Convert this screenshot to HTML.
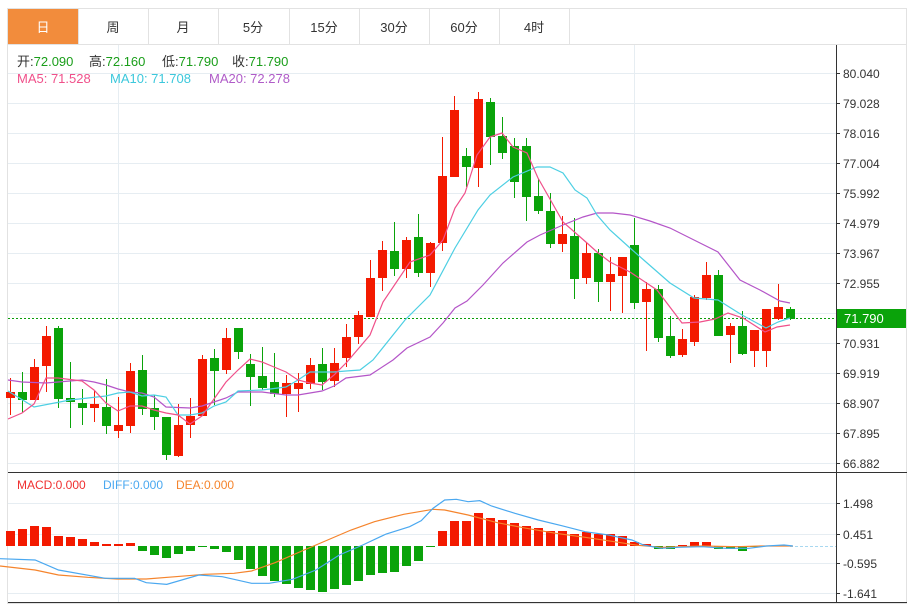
<!DOCTYPE html>
<html><head><meta charset="utf-8"><style>
body{margin:0;width:913px;height:605px;background:#fff;overflow:hidden;font-family:"Liberation Sans","Noto Sans CJK SC",sans-serif}
svg{position:absolute;left:0;top:0}
</style></head><body>
<svg width="913" height="605" viewBox="0 0 913 605" font-family="Liberation Sans, Noto Sans CJK SC, sans-serif">
<rect x="7.5" y="8.5" width="899" height="595" fill="none" stroke="#e2e2e2"/>
<line x1="8" y1="44.5" x2="907" y2="44.5" stroke="#e2e2e2"/>
<rect x="8" y="9" width="70" height="35" fill="#f28c3c"/>
<g stroke="#e2e2e2"><line x1="78.5" y1="9" x2="78.5" y2="44"/><line x1="148.5" y1="9" x2="148.5" y2="44"/><line x1="218.5" y1="9" x2="218.5" y2="44"/><line x1="289.5" y1="9" x2="289.5" y2="44"/><line x1="359.5" y1="9" x2="359.5" y2="44"/><line x1="429.5" y1="9" x2="429.5" y2="44"/><line x1="499.5" y1="9" x2="499.5" y2="44"/><line x1="569.5" y1="9" x2="569.5" y2="44"/></g>
<g font-size="13" text-anchor="middle" fill="#333"><text x="43" y="32" fill="#fff">日</text><text x="113" y="32">周</text><text x="183" y="32">月</text><text x="253" y="32">5分</text><text x="324" y="32">15分</text><text x="394" y="32">30分</text><text x="464" y="32">60分</text><text x="534" y="32">4时</text></g>
<g stroke="#e6edf2" stroke-width="1">
<line x1="8" y1="73.5" x2="836" y2="73.5"/><line x1="8" y1="103.5" x2="836" y2="103.5"/><line x1="8" y1="133.5" x2="836" y2="133.5"/><line x1="8" y1="163.5" x2="836" y2="163.5"/><line x1="8" y1="193.5" x2="836" y2="193.5"/><line x1="8" y1="223.5" x2="836" y2="223.5"/><line x1="8" y1="253.5" x2="836" y2="253.5"/><line x1="8" y1="283.5" x2="836" y2="283.5"/><line x1="8" y1="313.5" x2="836" y2="313.5"/><line x1="8" y1="343.5" x2="836" y2="343.5"/><line x1="8" y1="373.5" x2="836" y2="373.5"/><line x1="8" y1="403.5" x2="836" y2="403.5"/><line x1="8" y1="433.5" x2="836" y2="433.5"/><line x1="8" y1="463.5" x2="836" y2="463.5"/>
<line x1="118.5" y1="45" x2="118.5" y2="603"/><line x1="634.5" y1="45" x2="634.5" y2="603"/>
<line x1="8" y1="503.5" x2="836" y2="503.5"/><line x1="8" y1="534.5" x2="836" y2="534.5"/><line x1="8" y1="563.5" x2="836" y2="563.5"/><line x1="8" y1="593.5" x2="836" y2="593.5"/>
</g>
<line x1="836.5" y1="45" x2="836.5" y2="603" stroke="#333"/>
<line x1="8" y1="472.5" x2="907" y2="472.5" stroke="#333"/>
<line x1="8" y1="602.5" x2="907" y2="602.5" stroke="#333"/>
<g stroke="#333"><line x1="836" y1="73.5" x2="840" y2="73.5"/><line x1="836" y1="103.5" x2="840" y2="103.5"/><line x1="836" y1="133.5" x2="840" y2="133.5"/><line x1="836" y1="163.5" x2="840" y2="163.5"/><line x1="836" y1="193.5" x2="840" y2="193.5"/><line x1="836" y1="223.5" x2="840" y2="223.5"/><line x1="836" y1="253.5" x2="840" y2="253.5"/><line x1="836" y1="283.5" x2="840" y2="283.5"/><line x1="836" y1="343.5" x2="840" y2="343.5"/><line x1="836" y1="373.5" x2="840" y2="373.5"/><line x1="836" y1="403.5" x2="840" y2="403.5"/><line x1="836" y1="433.5" x2="840" y2="433.5"/><line x1="836" y1="463.5" x2="840" y2="463.5"/><line x1="836" y1="503.5" x2="840" y2="503.5"/><line x1="836" y1="534.5" x2="840" y2="534.5"/><line x1="836" y1="563.5" x2="840" y2="563.5"/><line x1="836" y1="593.5" x2="840" y2="593.5"/></g>
<g font-size="12" fill="#333"><text x="843" y="78">80.040</text><text x="843" y="108">79.028</text><text x="843" y="138">78.016</text><text x="843" y="168">77.004</text><text x="843" y="198">75.992</text><text x="843" y="228">74.979</text><text x="843" y="258">73.967</text><text x="843" y="288">72.955</text><text x="843" y="318">71.943</text><text x="843" y="348">70.931</text><text x="843" y="378">69.919</text><text x="843" y="408">68.907</text><text x="843" y="438">67.895</text><text x="843" y="468">66.882</text>
<text x="843" y="508">1.498</text><text x="843" y="539">0.451</text><text x="843" y="568">-0.595</text><text x="843" y="598">-1.641</text></g>
<line x1="8" y1="318.5" x2="836" y2="318.5" stroke="#0a9e0a" stroke-dasharray="2,2"/>
<rect x="837" y="309" width="69" height="19" fill="#0aa30a"/>
<text x="844" y="323" font-size="13" fill="#fff">71.790</text>
<g font-size="13">
<text x="17" y="66" fill="#333">开:<tspan fill="#1a9e1a">72.090</tspan></text>
<text x="89" y="66" fill="#333">高:<tspan fill="#1a9e1a">72.160</tspan></text>
<text x="162" y="66" fill="#333">低:<tspan fill="#1a9e1a">71.790</tspan></text>
<text x="232" y="66" fill="#333">收:<tspan fill="#1a9e1a">71.790</tspan></text>
<text x="17" y="83" fill="#f0508a">MA5: 71.528</text><text x="110" y="83" fill="#3cc8dc">MA10: 71.708</text><text x="209" y="83" fill="#b05cc8">MA20: 72.278</text></g>
<g stroke="#f31a00" fill="#f31a00">
<path fill="none" d="M10.5 378V415M34.5 359V400M46.5 326V392M94.5 390V422M118.5 397V438M130.5 363V433M178.5 404V457M190.5 398V438M202.5 355V416M226.5 328V374M286.5 375V417M298.5 373V412M310.5 358V389M334.5 348V387M346.5 324V367M358.5 311V344M370.5 260V317M382.5 241V291M406.5 237V278M430.5 242V287M442.5 137V251M454.5 96V177M478.5 92V187M562.5 216V252M586.5 243V284M610.5 257V311M622.5 257V313M646.5 282V351M682.5 329V357M694.5 295V346M706.5 262V300M730.5 323V363M754.5 330V367M766.5 309V367M778.5 284V320"/>
<path stroke="none" d="M6 392h9v6h-9zM30 367h9v33h-9zM42 336h9v30h-9zM90 404h9v4h-9zM114 425h9v6h-9zM126 371h9v55h-9zM174 425h9v31h-9zM186 416h9v9h-9zM198 359h9v57h-9zM222 338h9v32h-9zM282 383h9v11h-9zM294 383h9v6h-9zM306 365h9v19h-9zM330 363h9v18h-9zM342 337h9v21h-9zM354 315h9v22h-9zM366 278h9v39h-9zM378 250h9v28h-9zM402 240h9v29h-9zM426 243h9v30h-9zM438 176h9v67h-9zM450 110h9v67h-9zM474 99h9v69h-9zM558 234h9v10h-9zM582 253h9v25h-9zM606 274h9v8h-9zM618 257h9v19h-9zM642 289h9v13h-9zM678 339h9v16h-9zM690 297h9v45h-9zM702 275h9v23h-9zM726 326h9v9h-9zM750 330h9v21h-9zM762 309h9v42h-9zM774 307h9v12h-9z"/>
</g>
<g stroke="#0aa30a" fill="#0aa30a">
<path fill="none" d="M22.5 372V412M58.5 326V408M70.5 362V428M82.5 389V425M106.5 379V434M142.5 355V415M154.5 395V430M166.5 417V460M214.5 349V405M238.5 328V359M250.5 354V406M262.5 347V390M274.5 353V397M322.5 348V390M394.5 222V276M418.5 214V277M466.5 148V187M490.5 98V165M502.5 117V159M514.5 138V198M526.5 138V221M538.5 179V214M550.5 193V248M574.5 218V299M598.5 249V302M634.5 218V309M658.5 285V342M670.5 316V358M718.5 270V336M742.5 311V355M790.5 307V320"/>
<path stroke="none" d="M18 392h9v8h-9zM54 328h9v71h-9zM66 398h9v4h-9zM78 403h9v5h-9zM102 407h9v19h-9zM138 370h9v39h-9zM150 408h9v9h-9zM162 417h9v38h-9zM210 358h9v13h-9zM234 328h9v24h-9zM246 364h9v13h-9zM258 376h9v12h-9zM270 382h9v12h-9zM318 364h9v18h-9zM390 251h9v18h-9zM414 237h9v36h-9zM462 156h9v11h-9zM486 102h9v35h-9zM498 136h9v17h-9zM510 146h9v36h-9zM522 146h9v51h-9zM534 196h9v15h-9zM546 211h9v33h-9zM570 236h9v43h-9zM594 253h9v29h-9zM630 245h9v58h-9zM654 289h9v49h-9zM666 336h9v20h-9zM714 275h9v61h-9zM738 326h9v28h-9zM786 309h9v10h-9z"/>
</g>
<g fill="none" stroke-width="1.2">
<polyline stroke="#b455c8" points="8,380 22,382 46,383 70,381 82,380 94,382 106,385 118,389 130,392 142,393 154,397 166,407 190,408 202,406 214,402 226,398 238,392 262,392 286,395 298,395 310,393 322,391 334,386 346,378 370,375 393,360 407,348 430,337 443,323 455,308 467,301 483,285 503,263 527,242 540,235 563,225 583,217 597,213 613,213 630,215 650,221 670,228 694,240 718,252 740,280 760,290 780,301 790,303"/>
<polyline stroke="#4dcfe3" points="8,391 34,407 70,400 106,396 118,393 130,392 142,396 154,395 166,397 178,415 190,415 202,413 214,406 226,402 238,391 262,390 286,387 298,380 310,372 334,372 346,371 360,370 373,360 405,320 430,295 455,248 478,210 490,195 513,177 537,167 550,167 563,173 575,190 587,198 597,215 610,230 630,248 646,262 670,283 694,298 718,300 742,315 766,328 778,322 790,318"/>
<polyline stroke="#f0508a" points="8,419 22,413 34,404 46,378 58,378 82,381 94,390 106,403 118,411 130,406 142,406 154,410 166,413 178,415 190,424 202,416 214,399 226,382 238,370 250,359 262,362 274,367 286,372 298,380 310,383 322,385 334,375 347,362 370,335 383,302 410,262 430,255 443,240 455,208 465,193 477,155 490,137 502,133 513,147 527,153 538,178 563,222 587,243 597,252 610,262 630,272 657,290 682,323 700,322 715,319 728,313 743,318 765,332 777,327 790,325"/>
</g>
<g font-size="12"><text x="17" y="489" fill="#f03030">MACD:0.000</text><text x="103" y="489" fill="#4aa8f0">DIFF:0.000</text><text x="176" y="489" fill="#f5842c">DEA:0.000</text></g>
<line x1="790" y1="546.5" x2="836" y2="546.5" stroke="#a8d8f0" stroke-dasharray="3,2"/>
<path fill="#f31a00" d="M6 531h9v15h-9zM18 529h9v17h-9zM30 526h9v20h-9zM42 527h9v19h-9zM54 536h9v10h-9zM66 537h9v9h-9zM78 539h9v7h-9zM90 542h9v4h-9zM102 544h9v2h-9zM114 544h9v2h-9zM126 543h9v3h-9zM438 531h9v15h-9zM450 521h9v25h-9zM462 521h9v25h-9zM474 513h9v33h-9zM486 518h9v28h-9zM498 520h9v26h-9zM510 523h9v23h-9zM522 526h9v20h-9zM534 528h9v18h-9zM546 531h9v15h-9zM558 531h9v15h-9zM570 534h9v12h-9zM582 532h9v14h-9zM594 534h9v12h-9zM606 534h9v12h-9zM618 536h9v10h-9zM630 542h9v4h-9zM642 544h9v2h-9zM678 545h9v1h-9zM690 542h9v4h-9zM702 542h9v4h-9z"/>
<path fill="#0aa30a" d="M138 546h9v5h-9zM150 546h9v9h-9zM162 546h9v12h-9zM174 546h9v8h-9zM186 546h9v5h-9zM198 546h9v1h-9zM210 546h9v3h-9zM222 546h9v6h-9zM234 546h9v14h-9zM246 546h9v23h-9zM258 546h9v30h-9zM270 546h9v35h-9zM282 546h9v38h-9zM294 546h9v42h-9zM306 546h9v44h-9zM318 546h9v46h-9zM330 546h9v43h-9zM342 546h9v39h-9zM354 546h9v35h-9zM366 546h9v29h-9zM378 546h9v27h-9zM390 546h9v26h-9zM402 546h9v20h-9zM414 546h9v15h-9zM426 546h9v1h-9zM654 546h9v3h-9zM666 546h9v3h-9zM714 546h9v3h-9zM726 546h9v3h-9zM738 546h9v5h-9zM750 546h9v1h-9z"/>
<g transform="translate(0,460) scale(0.5851,0.33333)" fill="none">
<polyline vector-effect="non-scaling-stroke" stroke="#f5842c" stroke-width="1.2" points="0,318 60,330 100,345 150,352 200,357 250,357 300,350 350,343 400,340 430,333 470,308 520,270 560,240 600,210 640,185 690,163 740,148 760,150 800,165 850,188 900,205 950,220 1000,232 1050,245 1090,256 1130,262 1200,258 1260,260 1300,258 1355,258"/>
<polyline vector-effect="non-scaling-stroke" stroke="#4aa8f0" stroke-width="1.2" points="0,296 60,300 100,330 180,355 230,355 250,368 285,373 340,345 380,350 430,370 460,370 500,358 540,330 580,285 620,255 660,222 700,200 720,182 740,145 760,120 780,118 800,125 820,122 840,138 880,160 920,180 960,197 1000,215 1040,225 1080,240 1100,255 1130,265 1160,262 1200,260 1240,265 1280,265 1310,258 1340,255 1355,258"/>
</g>
</svg>
</body></html>
